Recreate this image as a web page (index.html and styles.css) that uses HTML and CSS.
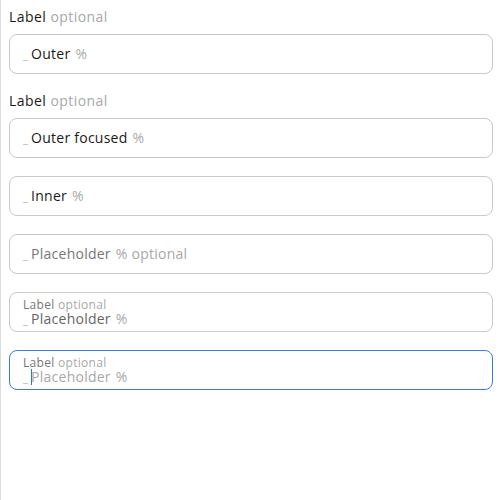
FILE: index.html
```html
<!DOCTYPE html>
<html>
<head>
<meta charset="utf-8">
<link rel="stylesheet" href="styles.css">
</head>
<body>
<div class="page">
  <div class="field">
    <div class="label">Label <span class="opt">optional</span></div>
    <div class="box"><span class="pre">_</span><span class="val">Outer</span><span class="suf">%</span></div>
  </div>
  <div class="field">
    <div class="label">Label <span class="opt">optional</span></div>
    <div class="box"><span class="pre">_</span><span class="val">Outer focused</span><span class="suf">%</span></div>
  </div>
  <div class="field">
    <div class="box"><span class="pre">_</span><span class="val">Inner</span><span class="suf">%</span></div>
  </div>
  <div class="field">
    <div class="box"><span class="pre">_</span><span class="ph">Placeholder</span><span class="suf">% optional</span></div>
  </div>
  <div class="field">
    <div class="box float">
      <div class="flabel">Label <span class="opt">optional</span></div>
      <div class="line"><span class="pre">_</span><span class="ph dark">Placeholder</span><span class="suf">%</span></div>
    </div>
  </div>
  <div class="field">
    <div class="box float focus">
      <div class="flabel">Label <span class="opt">optional</span></div>
      <div class="line"><span class="pre">_</span><span class="caret"></span><span class="ph light">Placeholder</span><span class="suf light">%</span></div>
    </div>
  </div>
</div>
</body>
</html>
```
FILE: styles.css
```css
html, body {
  margin: 0;
  padding: 0;
  background: #fff;
}
body {
  font-family: "Open Sans", "Noto Sans", sans-serif;
  font-size: 14px;
  letter-spacing: 0.25px;
  color: #1a1a1a;
}
.page {
  min-height: 500px;
  box-sizing: border-box;
  border-left: 1px solid #dcdcdc;
  padding: 8px 7px 0 8px;
  display: flex;
  flex-direction: column;
  gap: 18px;
}
.field {
  display: flex;
  flex-direction: column;
  gap: 8px;
}
.label {
  line-height: 18px;
  height: 18px;
  color: #1a1a1a;
  letter-spacing: 0.45px;
}
.opt {
  color: #a8a8a8;
}
.box {
  height: 40px;
  box-sizing: border-box;
  border: 1px solid #c9c9c9;
  border-radius: 8px;
  padding: 0 13px;
  display: flex;
  align-items: center;
  line-height: 18px;
}
.pre {
  color: #b0b0b0;
  font-size: 11px;
  margin-right: 3px;
  position: relative;
  top: 1px;
}
.val {
  color: #1a1a1a;
}
.suf {
  color: #a8a8a8;
  margin-left: 5px;
}
.ph {
  color: #777;
}
.ph.dark {
  color: #666;
}
.ph.light {
  color: #a8a8a8;
}
.float {
  flex-direction: column;
  align-items: flex-start;
  justify-content: center;
}
.flabel {
  font-size: 12px;
  line-height: 13px;
  letter-spacing: 0.3px;
  color: #777;
}
.line {
  display: flex;
  align-items: center;
  line-height: 15px;
}
.focus {
  border-color: #3b7ae8;
}
.caret {
  display: inline-block;
  width: 1px;
  height: 16px;
  background: #2f6fe0;
  margin-right: -1px;
}
```
